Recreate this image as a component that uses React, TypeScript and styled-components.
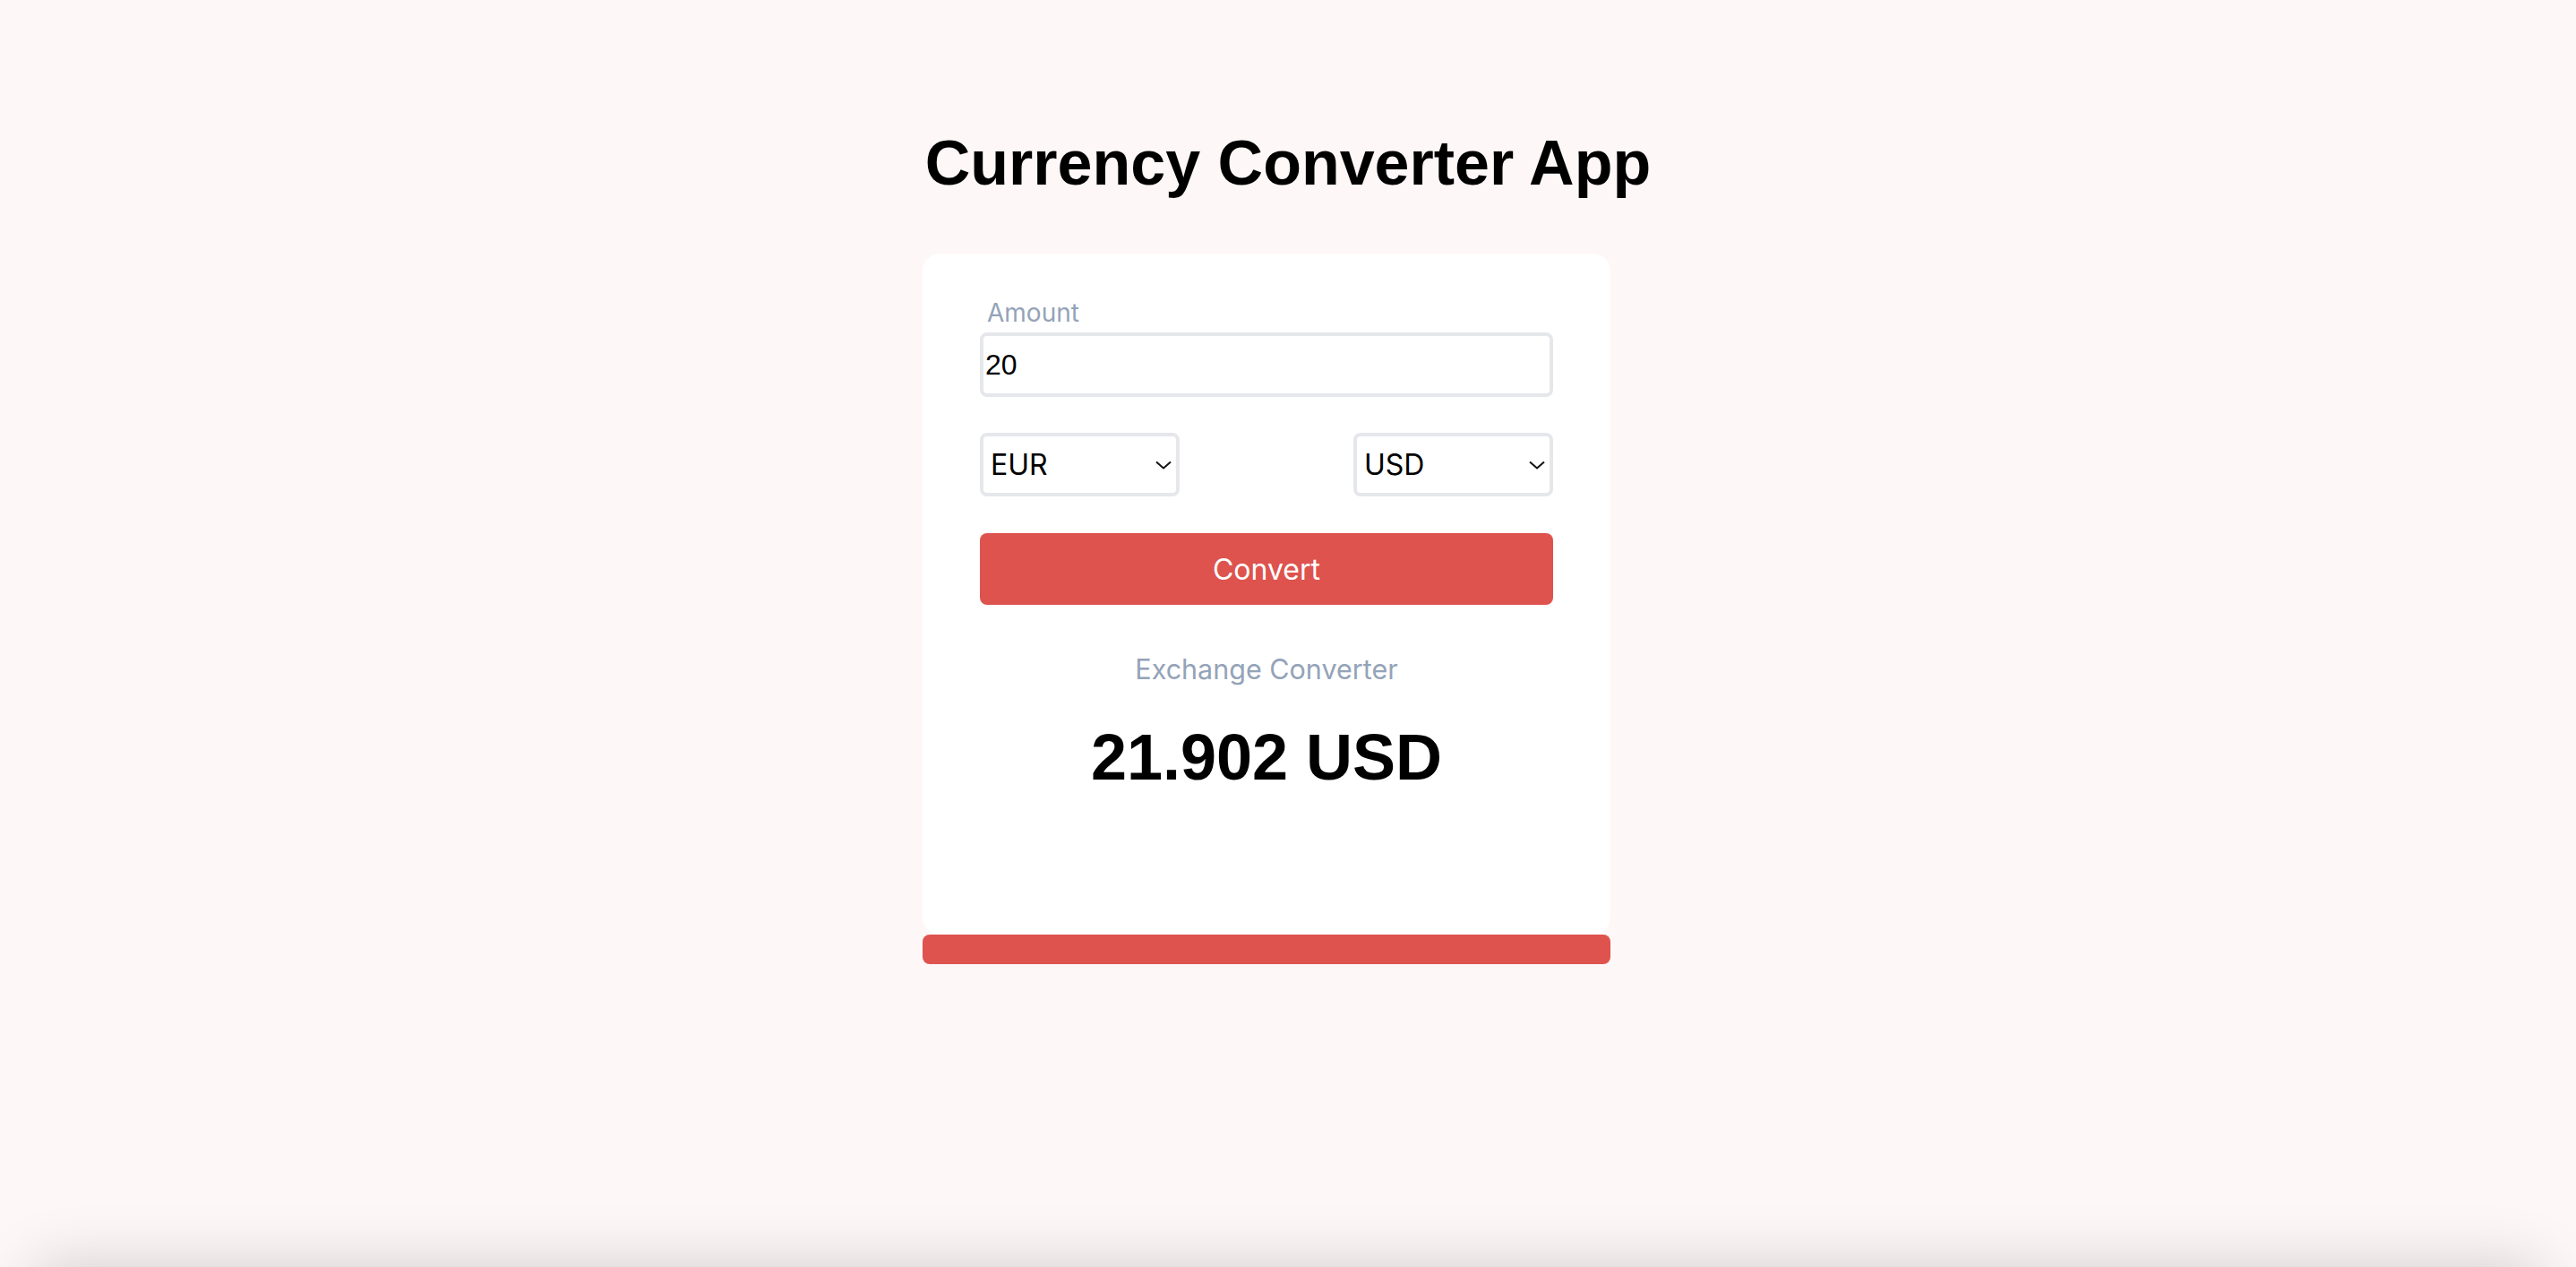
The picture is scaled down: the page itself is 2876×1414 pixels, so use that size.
import styled, { createGlobalStyle } from "styled-components";
import { useState } from "react";

const rates: Record<string, number> = {
  USD: 1,
  EUR: 1.0951,
  GBP: 1.27,
  JPY: 0.0067,
};

const GlobalStyle = createGlobalStyle`
  html, body {
    margin: 0;
    padding: 0;
    background: #fef7f7;
  }
  body {
    font-family: Inter, "Liberation Sans", sans-serif;
    overflow: hidden;
  }
`;

export default function App() {
  const [amount, setAmount] = useState("20");
  const [from, setFrom] = useState("EUR");
  const [to, setTo] = useState("USD");
  const [result, setResult] = useState("21.902 USD");

  const convert = () => {
    const value = (parseFloat(amount) || 0) * (rates[from] / rates[to]);
    setResult(`${parseFloat(value.toFixed(3))} ${to}`);
  };

  return (
    <>
      <GlobalStyle />
      <Page>
        <Title>Currency Converter App</Title>
        <Column>
          <Card>
            <Label htmlFor="amount">Amount</Label>
            <Input
              id="amount"
              value={amount}
              onChange={(e) => setAmount(e.target.value)}
            />
            <SelectRow>
              <SelectWrap>
                <Select value={from} onChange={(e) => setFrom(e.target.value)}>
                  {Object.keys(rates).map((c) => (
                    <option key={c}>{c}</option>
                  ))}
                </Select>
                <Chevron />
              </SelectWrap>
              <SelectWrap>
                <Select value={to} onChange={(e) => setTo(e.target.value)}>
                  {Object.keys(rates).map((c) => (
                    <option key={c}>{c}</option>
                  ))}
                </Select>
                <Chevron />
              </SelectWrap>
            </SelectRow>
            <Button onClick={convert}>Convert</Button>
            <Caption>Exchange Converter</Caption>
            <Result>{result}</Result>
          </Card>
          <Bar />
        </Column>
        <Footer />
      </Page>
    </>
  );
}

function Chevron() {
  return (
    <ChevronIcon width="20" height="10" viewBox="0 0 20 10" fill="none">
      <path d="M2 1.5 L10 8.5 L18 1.5" stroke="#111" strokeWidth="2" />
    </ChevronIcon>
  );
}

const Page = styled.main`
  height: 100vh;
  box-sizing: border-box;
  padding-top: 142px;
  display: flex;
  flex-direction: column;
  align-items: center;
  overflow: hidden;
`;

const Title = styled.h1`
  margin: 0 0 61px;
  font-family: "Liberation Sans", Arial, sans-serif;
  font-weight: 700;
  font-size: 70px;
  line-height: 80px;
  color: #000;
`;

const Column = styled.div`
  width: 768px;
  margin-right: 48px;
  display: flex;
  flex-direction: column;
`;

const Card = styled.div`
  background: #ffffff;
  border-radius: 20px;
  padding: 46px 64px 158px;
  display: flex;
  flex-direction: column;
`;

const Label = styled.label`
  font-size: 28px;
  line-height: 40px;
  color: #94a3b8;
  margin: 0 0 2px 8px;
`;

const Input = styled.input`
  box-sizing: border-box;
  width: 640px;
  height: 72px;
  border: 4px solid #e5e7eb;
  border-radius: 8px;
  padding: 0 2px;
  font-family: "Liberation Sans", Arial, sans-serif;
  font-size: 32px;
  color: #000;
  outline: none;
`;

const SelectRow = styled.div`
  display: flex;
  justify-content: space-between;
  margin-top: 40px;
`;

const SelectWrap = styled.div`
  position: relative;
  width: 223px;
  height: 71px;
`;

const Select = styled.select`
  appearance: none;
  box-sizing: border-box;
  width: 100%;
  height: 100%;
  border: 4px solid #e5e7eb;
  border-radius: 8px;
  background: #fff;
  padding: 0 0 0 8px;
  font-family: Inter, sans-serif;
  font-size: 32px;
  color: #000;
  outline: none;
`;

const ChevronIcon = styled.svg`
  position: absolute;
  right: 8px;
  top: 31px;
  pointer-events: none;
`;

const Button = styled.button`
  margin-top: 41px;
  height: 80px;
  border: none;
  border-radius: 8px;
  background: #de534e;
  color: #fff;
  font-family: Inter, sans-serif;
  font-size: 32px;
  cursor: pointer;
`;

const Caption = styled.p`
  margin: 48px 0 0;
  text-align: center;
  font-size: 30.5px;
  line-height: 48px;
  color: #94a3b8;
`;

const Result = styled.p`
  margin: 34px 0 0;
  text-align: center;
  font-family: "Liberation Sans", Arial, sans-serif;
  font-weight: 700;
  font-size: 72px;
  line-height: 80px;
  color: #000;
`;

const Bar = styled.div`
  height: 33px;
  border-radius: 8px;
  background: #de534e;
`;

const Footer = styled.footer`
  flex-shrink: 0;
  align-self: stretch;
  height: 200px;
  margin: auto 40px -200px;
  background: #fef7f7;
  box-shadow: 0 0 70px rgba(0, 0, 0, 0.18);
`;
